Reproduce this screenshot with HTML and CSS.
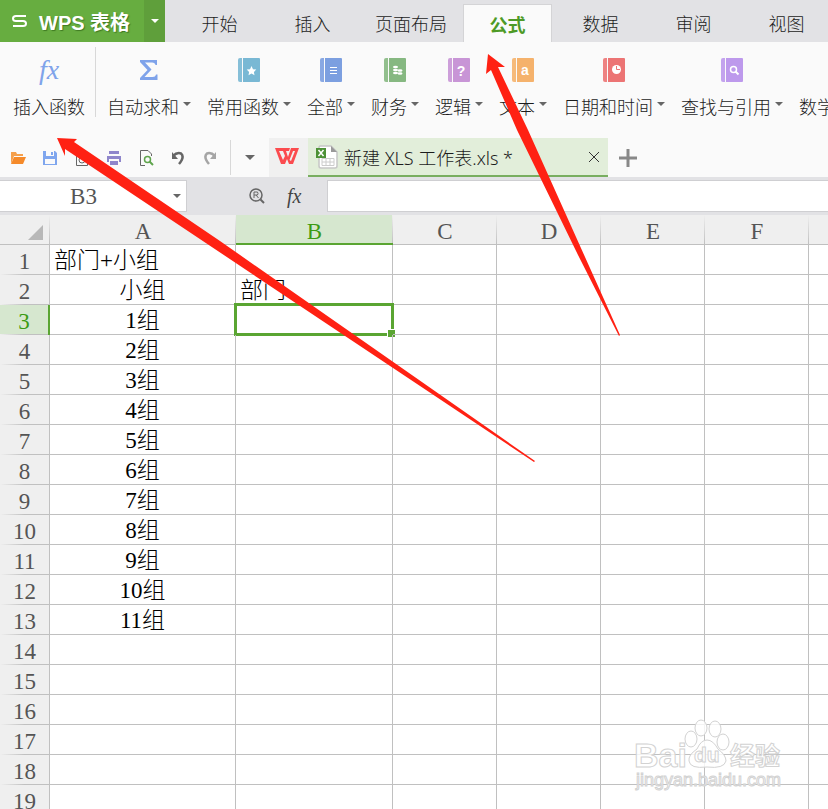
FILE: index.html
```html
<!DOCTYPE html>
<html lang="zh-CN">
<head>
    <meta charset="UTF-8">
    <meta name="viewport" content="width=device-width, initial-scale=1.0">
    <title>WPS 表格</title>
    <link rel="stylesheet" href="styles.css">
</head>
<body>
    <div class="app">
        <nav class="tabs">
            <button class="brand">
                <svg width="15" height="14" viewBox="0 0 15 14"><path d="M14 2H4Q1 2 1 4.500Q1 7 4 7H11Q14 7 14 9.500Q14 12 11 12H1" fill="none" stroke="#fff" stroke-width="2"/></svg>
                <span>WPS 表格</span>
            </button>
            <button class="brand_menu" aria-label="菜单"><span class="caret"></span></button>
            <div class="tab_list">
                <a class="tab" href="#">开始</a>
                <a class="tab" href="#">插入</a>
                <a class="tab" href="#">页面布局</a>
                <a class="tab active" href="#">公式</a>
                <a class="tab" href="#">数据</a>
                <a class="tab" href="#">审阅</a>
                <a class="tab" href="#">视图</a>
            </div>
        </nav>

        <div class="ribbon">
            <button class="tool">
                <span class="tool_icon fx">fx</span>
                <span class="tool_label">插入函数</span>
            </button>
            <div class="divider"></div>
            <button class="tool">
                <span class="tool_icon"><svg width="20" height="22" viewBox="0 0 20 22"><path d="M1 1H18V6H16.500Q16 3.500 13 3.500H6L12.500 10.500L5.500 18H13.500Q16.500 18 17 15.500H18.500V21H1V19L8.500 11L1 3Z" fill="#7fa3ea"/></svg></span>
                <span class="tool_label">自动求和<span class="caret"></span></span>
            </button>
            <button class="tool">
                <span class="tool_icon"><svg class="book teal" viewBox="0 0 22 24"><path class="spine" d="M2 0H4V24H2Q0 24 0 22V2Q0 0 2 0Z"/><path class="cover" d="M5 0H21Q22 0 22 1V23Q22 24 21 24H5Z"/><path d="M13.500 8L15 11.200L18.300 11.600L15.900 13.900L16.500 17.300L13.500 15.600L10.500 17.300L11.100 13.900L8.700 11.600L12 11.200Z" fill="#fff"/></svg></span>
                <span class="tool_label">常用函数<span class="caret"></span></span>
            </button>
            <button class="tool">
                <span class="tool_icon"><svg class="book blue" viewBox="0 0 22 24"><path class="spine" d="M2 0H4V24H2Q0 24 0 22V2Q0 0 2 0Z"/><path class="cover" d="M5 0H21Q22 0 22 1V23Q22 24 21 24H5Z"/><path d="M10 9.500H17M10 12.500H17M10 15.500H17" stroke="#fff"/></svg></span>
                <span class="tool_label">全部<span class="caret"></span></span>
            </button>
            <button class="tool">
                <span class="tool_icon"><svg class="book green" viewBox="0 0 22 24"><path class="spine" d="M2 0H4V24H2Q0 24 0 22V2Q0 0 2 0Z"/><path class="cover" d="M5 0H21Q22 0 22 1V23Q22 24 21 24H5Z"/><g fill="#fff"><ellipse cx="11.500" cy="9" rx="2.500" ry="1.200"/><ellipse cx="11.500" cy="12" rx="2.500" ry="1.200"/><ellipse cx="11.500" cy="15" rx="2.500" ry="1.200"/><ellipse cx="16" cy="12.500" rx="2.500" ry="1.200"/><ellipse cx="16" cy="15.500" rx="2.500" ry="1.200"/></g></svg></span>
                <span class="tool_label">财务<span class="caret"></span></span>
            </button>
            <button class="tool">
                <span class="tool_icon"><svg class="book pink" viewBox="0 0 22 24"><path class="spine" d="M2 0H4V24H2Q0 24 0 22V2Q0 0 2 0Z"/><path class="cover" d="M5 0H21Q22 0 22 1V23Q22 24 21 24H5Z"/><text x="13" y="18" class="book_mark">?</text></svg></span>
                <span class="tool_label">逻辑<span class="caret"></span></span>
            </button>
            <button class="tool">
                <span class="tool_icon"><svg class="book orange" viewBox="0 0 22 24"><path class="spine" d="M2 0H4V24H2Q0 24 0 22V2Q0 0 2 0Z"/><path class="cover" d="M5 0H21Q22 0 22 1V23Q22 24 21 24H5Z"/><text x="13" y="17" class="book_mark">a</text></svg></span>
                <span class="tool_label">文本<span class="caret"></span></span>
            </button>
            <button class="tool">
                <span class="tool_icon"><svg class="book red" viewBox="0 0 22 24"><path class="spine" d="M2 0H4V24H2Q0 24 0 22V2Q0 0 2 0Z"/><path class="cover" d="M5 0H21Q22 0 22 1V23Q22 24 21 24H5Z"/><circle cx="13.500" cy="11.500" r="4.500" fill="#fff"/><path d="M13.500 8V11.500H17" class="clock_hand"/></svg></span>
                <span class="tool_label">日期和时间<span class="caret"></span></span>
            </button>
            <button class="tool">
                <span class="tool_icon"><svg class="book violet" viewBox="0 0 22 24"><path class="spine" d="M2 0H4V24H2Q0 24 0 22V2Q0 0 2 0Z"/><path class="cover" d="M5 0H21Q22 0 22 1V23Q22 24 21 24H5Z"/><circle cx="12.500" cy="11.500" r="3" fill="none" stroke="#fff" stroke-width="1.500"/><path d="M14.500 13.500L17.500 16.500" stroke="#fff" stroke-width="2"/></svg></span>
                <span class="tool_label">查找与引用<span class="caret"></span></span>
            </button>
            <button class="tool">
                <span class="tool_icon"></span>
                <span class="tool_label">数学和三角<span class="caret"></span></span>
            </button>
        </div>

        <div class="quick_bar">
            <div class="quick_tools">
                <button aria-label="打开"><svg width="16" height="16" viewBox="0 0 16 16"><path d="M1 14V2H6L7 4H13V6H4Z" fill="#f5a04c"/><path d="M4 7H16L13 14H1Z" fill="#f58a2a"/></svg></button>
                <button aria-label="保存"><svg width="16" height="16" viewBox="0 0 16 16"><path d="M1 1H13L15 3V15H1Z" fill="#7fa6ee"/><path d="M4 1H12V6H4ZM3 9H13V14H3Z" fill="#fafafa"/><path d="M9 2H11V5H9Z" fill="#7fa6ee"/></svg></button>
                <button aria-label="输出"><svg width="16" height="16" viewBox="0 0 16 16"><path d="M2.500 .5H10L13.500 4V15.500H2.500ZM9.500 1V4.500H13" fill="none" stroke="#666"/><circle cx="8" cy="10" r="3" fill="none" stroke="#666"/></svg></button>
                <button aria-label="打印"><svg width="16" height="16" viewBox="0 0 16 16"><path d="M3 1H13V4H3ZM1 6H15V12H13V9H3V12H1Z" fill="#8f86cb"/><path d="M4 11H12V15H4Z" fill="#8f86cb"/></svg></button>
                <button aria-label="打印预览"><svg width="16" height="16" viewBox="0 0 16 16"><path d="M7 15.500H2.500V.5H10L13.500 4V6" fill="none" stroke="#666"/><circle cx="9.500" cy="9.500" r="3" fill="none" stroke="#5fa44c" stroke-width="1.500"/><path d="M11.500 11.500L15 15" stroke="#5fa44c" stroke-width="2"/></svg></button>
                <button aria-label="撤销"><svg width="16" height="16" viewBox="0 0 16 16"><path d="M3 6Q7 2 11 3.500Q15 7 9 14" fill="none" stroke="#666" stroke-width="2.500"/><path d="M2 2V9H8Z" fill="#666"/></svg></button>
                <button aria-label="恢复"><svg width="16" height="16" viewBox="0 0 16 16"><path d="M13 6Q9 2 5 3.500Q1 7 7 14" fill="none" stroke="#a5a5a5" stroke-width="2.500"/><path d="M14 2V9H8Z" fill="#a5a5a5"/></svg></button>
            </div>
            <button class="quick_more" aria-label="更多"><span class="caret large"></span></button>
            <button class="wps_home" aria-label="WPS"><svg width="24" height="16" viewBox="0 0 24 16"><path d="M0 0H15L14 3H11L13 9L16 0H24L18 16H14L12 11L10 16H6ZM4 3L8 12L10 8L8 3ZM18 3L14.500 12L16 13L20 3Z" fill="#fb4b4f" fill-rule="evenodd"/></svg></button>
            <div class="file_tab">
                <svg width="22" height="24" viewBox="0 0 22 24"><path d="M4 1H15L21 7V21Q21 23 19 23H5Q3 23 3 21V2Z" fill="#fff" stroke="#c6c6c6" stroke-width="1.500"/><path d="M15 1L21 7H15Z" fill="#999"/><path d="M6 13.500H18M6 17H18M6 20.500H18M6 13.500V20.500M10 13.500V20.500M14 13.500V20.500M18 13.500V20.500" stroke="#ccc"/><path d="M0 3H10V13H0Z" fill="#4d9136"/><path d="M2.500 5L7.500 11M7.500 5L2.500 11" stroke="#fff" stroke-width="1.500"/></svg>
                <span class="file_name">新建 XLS 工作表.xls *</span>
                <button aria-label="关闭"><svg width="12" height="12" viewBox="0 0 12 12"><path d="M1 1L11 11M11 1L1 11" stroke="#333"/></svg></button>
            </div>
            <button class="add_tab" aria-label="新建"><svg width="18" height="18" viewBox="0 0 18 18"><path d="M9 0V18M0 9H18" stroke="#888" stroke-width="3"/></svg></button>
        </div>

        <div class="formula_bar">
            <div class="name_box">
                <input type="text" value="B3" aria-label="名称框">
                <span class="caret"></span>
            </div>
            <div class="formula_tools">
                <button aria-label="查找"><svg width="16" height="16" viewBox="0 0 16 16"><circle cx="7" cy="7" r="6" fill="none" stroke="#666" stroke-width="1.500"/><path d="M5 10V4H8.500Q9.500 5.500 8.500 7H5M7 7L9.500 10" fill="none" stroke="#666"/><path d="M11.500 11.500L15 15" stroke="#666" stroke-width="2"/></svg></button>
                <button class="formula_fx">fx</button>
            </div>
            <input class="formula_input" type="text" aria-label="编辑栏">
        </div>

        <div class="sheet">
            <table>
                <colgroup>
                    <col class="col_num"><col class="col_a"><col class="col_b">
                    <col class="col_std" span="5">
                </colgroup>
                <thead>
                    <tr>
                        <th class="corner"><svg width="15" height="15" viewBox="0 0 15 15"><path d="M15 0V15H0Z" fill="#b8b8b8"/></svg></th>
                        <th>A</th><th class="selected">B</th><th>C</th><th>D</th><th>E</th><th>F</th><th>G</th>
                    </tr>
                </thead>
                <tbody id="rows"></tbody>
            </table>
        </div>
    </div>

    <svg class="arrows" width="828" height="809" viewBox="0 0 828 809">
        <path d="M57 138L77 139L74 142L220 241L535 461L534 462L65 149L65 156Z"/>
        <path d="M488 54L505 67L498 67L528 130L620 335L619 336L578 255L517 130L491 70L486 74Z"/>
    </svg>

    <svg class="watermark" width="152" height="76" viewBox="0 0 152 76">
        <text class="logo" x="2" y="48">Bai</text>
        <ellipse cx="59" cy="20" rx="6" ry="8"/>
        <ellipse cx="69" cy="9" rx="6" ry="8"/>
        <ellipse cx="83" cy="10" rx="6" ry="8"/>
        <ellipse cx="91" cy="23" rx="6" ry="8"/>
        <path d="M75 21Q81 21 86 30Q94 36 94 42Q92 50 75 48Q58 50 57 42Q56 36 65 30Q69 21 75 21Z"/>
        <text class="du" x="62" y="43">du</text>
        <text class="jingyan" x="98" y="46">经验</text>
        <text class="url" x="4" y="67">jingyan.baidu.com</text>
    </svg>

    <script>
        const cells = {
            A1: "部门+小组", A2: "小组", B2: "部门"
        };
        for (let i = 1; i <= 11; i++) {
            cells["A" + (i + 2)] = i + "组";
        }

        const columns = "ABCDEFG".split("");
        const selected = "B3";
        const rows = document.getElementById("rows");

        for (let r = 1; r <= 19; r++) {
            const tr = document.createElement("tr");
            const th = document.createElement("th");
            th.textContent = r;
            if (selected === "B" + r) th.className = "selected";
            tr.appendChild(th);
            columns.forEach(function (c) {
                const td = document.createElement("td");
                td.textContent = cells[c + r] || "";
                if (c === "A" && r > 1) td.className = "center";
                if (c + r === selected) td.className = "current";
                tr.appendChild(td);
            });
            rows.appendChild(tr);
        }
    </script>
</body>
</html>
```
FILE: styles.css
```css
* {
    box-sizing: border-box;
}
body {
    margin: 0;
    overflow: hidden;
    font-family: "Noto Sans CJK SC", sans-serif;
    font-size: 18px;
    font-weight: 300;
    color: #1c1c1c;
}
button, input {
    margin: 0;
    padding: 0;
    border: none;
    background: none;
    font: inherit;
    color: inherit;
}
button svg {
    display: block;
}
.app {
    display: flex;
    flex-direction: column;
    height: 100vh;
    overflow: hidden;
    background: #fafafa;
}
.caret {
    display: inline-block;
    border: 4px solid transparent;
    border-top-color: #666;
    border-bottom: none;
}
.caret.large {
    border-width: 5px;
    border-bottom: none;
}

/* tabs */
.tabs {
    display: flex;
    flex: none;
    height: 42px;
    background: #e2e2e5;
}
.brand {
    display: flex;
    flex: none;
    align-items: center;
    gap: 12px;
    width: 144px;
    padding-left: 12px;
    background: #67ad40;
    color: #fff;
    font-family: "Liberation Sans", "Noto Sans CJK SC", sans-serif;
    font-size: 20px;
    font-weight: bold;
    white-space: nowrap;
    text-shadow: 1px 1px 1px #3f7a22;
}
.brand_menu {
    display: flex;
    flex: none;
    align-items: center;
    justify-content: center;
    width: 21px;
    background: #5f9f3b;
}
.brand_menu .caret {
    border-top-color: #fff;
}
.tab_list {
    display: flex;
    align-items: flex-end;
    padding-left: 8px;
}
.tab {
    flex: none;
    min-width: 93px;
    height: 38px;
    padding: 0 16px;
    line-height: 38px;
    text-align: center;
    text-decoration: none;
    white-space: nowrap;
    color: #1c1c1c;
}
.tab.active {
    min-width: 89px;
    margin: 0 2px 0 0;
    border: 1px solid #d4d4d6;
    border-bottom: none;
    background: #fafafa;
    color: #4e9a26;
    font-weight: bold;
}

/* ribbon */
.ribbon {
    display: flex;
    flex: none;
    gap: 16px;
    height: 96px;
    padding-left: 13px;
    overflow: hidden;
}
.tool {
    display: flex;
    flex: none;
    flex-direction: column;
    align-items: center;
    justify-content: flex-start;
    padding-top: 14px;
}
.tool_icon {
    display: flex;
    align-items: center;
    height: 28px;
}
.tool_label {
    display: flex;
    align-items: center;
    gap: 4px;
    height: 28px;
    margin-top: 8px;
    white-space: nowrap;
}
.tool_label .caret {
    margin-bottom: 4px;
}
.fx {
    font-family: "Liberation Serif", serif;
    font-size: 28px;
    font-weight: normal;
    font-style: italic;
    color: #7fa3ea;
}
.divider {
    flex: none;
    width: 1px;
    height: 70px;
    margin: 5px -5px 0 -6px;
    background: #d8d8d8;
}
.book {
    width: 22px;
    height: 24px;
}
.book_mark {
    fill: #fff;
    font-family: "Liberation Sans", sans-serif;
    font-size: 14px;
    font-weight: bold;
    text-anchor: middle;
}
.spine {
    opacity: 0.9;
}
.clock_hand {
    fill: none;
    stroke: #ec7474;
    stroke-width: 1;
}
.teal { fill: #79b8d4; }
.blue { fill: #7c9fe0; }
.green { fill: #86b881; }
.pink { fill: #c895d6; }
.orange { fill: #f5b26c; }
.red { fill: #ec7474; }
.violet { fill: #bd99ec; }

/* quick access bar and file tabs */
.quick_bar {
    display: flex;
    flex: none;
    height: 39px;
}
.quick_tools {
    display: flex;
    align-items: center;
    gap: 16px;
    width: 231px;
    margin: 2px 0;
    padding-left: 10px;
    border-right: 1px solid #d8d8d8;
}
.quick_more {
    display: flex;
    align-items: center;
    justify-content: center;
    width: 38px;
}
.wps_home {
    display: flex;
    align-items: center;
    justify-content: center;
    width: 39px;
    padding: 0 3px 3px 0;
    background: #f0f0f0;
}
.file_tab {
    display: flex;
    align-items: center;
    gap: 6px;
    width: 300px;
    padding: 0 8px;
    background: #e2eeda;
    border-bottom: 2px solid #79ae60;
    font-family: "Noto Sans", "Noto Sans CJK SC", sans-serif;
}
.file_name {
    flex: 1;
    white-space: nowrap;
}
.add_tab {
    padding: 0 11px;
}

/* formula bar */
.formula_bar {
    display: flex;
    flex: none;
    height: 38px;
    padding: 3px 0;
    background: #e2e2e5;
}
.name_box {
    display: flex;
    align-items: center;
    width: 187px;
    padding-right: 5px;
    background: #fff;
    border: 1px solid #cfcfd2;
    border-left: none;
}
.name_box input {
    flex: 1;
    min-width: 0;
    padding: 2px 6px 0 0;
    text-align: center;
    font-family: "Liberation Serif", "Noto Sans CJK SC", serif;
    font-size: 23px;
    font-weight: normal;
    color: #555;
}
.formula_tools {
    display: flex;
    align-items: center;
    gap: 22px;
    width: 140px;
    padding-left: 62px;
}
.formula_fx {
    font-family: "Liberation Serif", serif;
    font-size: 20px;
    font-weight: normal;
    font-style: italic;
    color: #444;
}
.formula_input {
    flex: 1;
    min-width: 0;
    padding: 0 6px;
    background: #fff;
    border: 1px solid #cfcfd2;
    border-right: none;
}

/* sheet */
.sheet {
    flex: 1;
    min-height: 0;
    overflow: hidden;
    background: #fff;
}
table {
    width: 100%;
    table-layout: fixed;
    border-collapse: separate;
    border-spacing: 0;
    font-family: "Liberation Serif", "Noto Sans CJK SC", serif;
    font-size: 23px;
}
.col_num { width: 50px; }
.col_a { width: 186px; }
.col_b { width: 157px; }
.col_std { width: 104px; }
th, td {
    height: 30px;
    border-right: 1px solid #c0c0c0;
    border-bottom: 1px solid #c0c0c0;
}
th {
    padding: 3px 0 0;
    line-height: 26px;
    background: #efefef;
    font-weight: normal;
    color: #555;
}
thead th {
    padding-top: 5px;
    line-height: 24px;
    border-right: none;
    background: linear-gradient(#efefef, #c0c0c0) right / 1px 100% no-repeat #efefef;
}
tbody th {
    border-bottom: none;
    background: linear-gradient(to right, #efefef, #c0c0c0 50%) bottom / 100% 1px no-repeat #efefef;
}
th.selected {
    background-color: #d6e7cf;
    color: #3c9b14;
}
thead th.selected {
    border-bottom: 2px solid #5aa532;
    line-height: 23px;
}
tbody th.selected {
    border-right: 2px solid #5aa532;
}
.corner {
    text-align: right;
}
.corner svg {
    display: block;
    margin: 0 7px 0 auto;
}
td {
    position: relative;
    padding: 3px 4px 0;
    line-height: 26px;
    text-align: left;
    white-space: nowrap;
    color: #000;
}
td.center {
    text-align: center;
}
.current::before {
    content: "";
    position: absolute;
    inset: -2px;
    border: 3px solid #5aa532;
}
.current::after {
    content: "";
    position: absolute;
    right: -4px;
    bottom: -4px;
    width: 7px;
    height: 7px;
    border: 1px solid #fff;
    background: #5aa532;
}

/* overlays */
.arrows {
    position: absolute;
    left: 0;
    top: 0;
    fill: #ff2113;
    pointer-events: none;
}
.watermark {
    position: absolute;
    left: 632px;
    top: 719px;
    overflow: visible;
    pointer-events: none;
    fill: #fff;
    fill-opacity: 0.8;
    stroke: #d2d2d2;
    stroke-width: 1;
    font-family: "Liberation Sans", "Noto Sans CJK SC", sans-serif;
    font-weight: bold;
}
.logo {
    font-size: 34px;
}
.du {
    font-size: 21px;
}
.jingyan {
    font-size: 25px;
}
.url {
    font-size: 18px;
    font-weight: normal;
}
```
